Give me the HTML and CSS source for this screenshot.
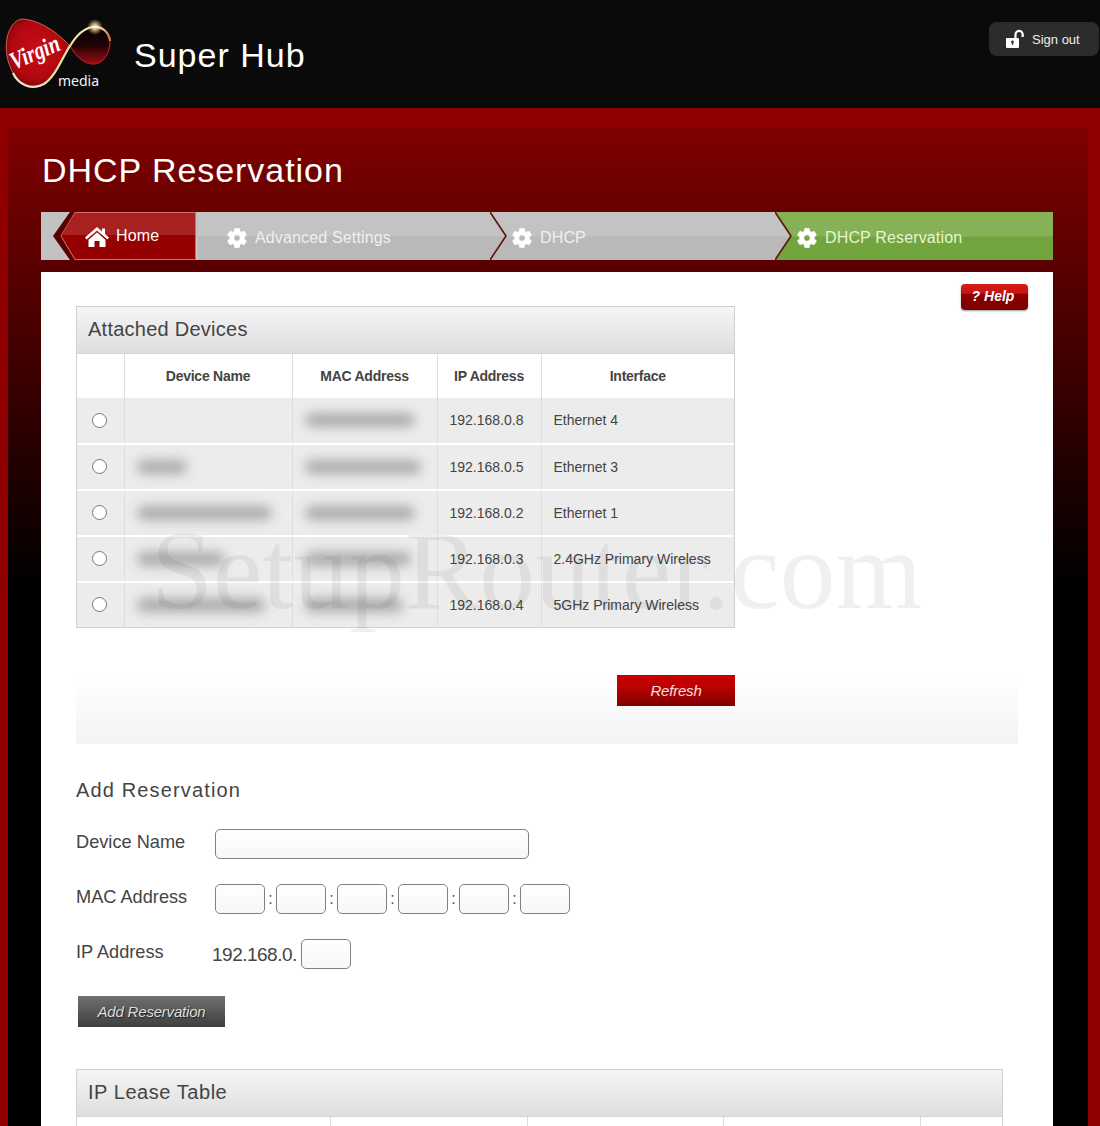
FILE: index.html
```html
<!DOCTYPE html>
<html lang="en">
  <head>
    <meta charset="utf-8" />
    <title>DHCP Reservation</title>
    <link rel="stylesheet" href="styles.css">
  </head>
  <body>
    <svg class="defs" xmlns="http://www.w3.org/2000/svg" width="0" height="0">
      <defs>
        <linearGradient id="tip-grey" x1="0" y1="0" x2="0" y2="1">
          <stop offset="0" stop-color="#c3c3c3"/>
          <stop offset="0.49" stop-color="#c3c3c3"/>
          <stop offset="0.53" stop-color="#b9b9b9"/>
          <stop offset="1" stop-color="#b9b9b9"/>
        </linearGradient>
      </defs>
      <symbol id="gear" viewBox="0 0 24 24">
        <path d="M19.14 12.94c.04-.3.06-.61.06-.94 0-.32-.02-.64-.07-.94l2.03-1.58c.18-.14.23-.41.12-.61l-1.92-3.32c-.12-.22-.37-.29-.59-.22l-2.39.96c-.5-.38-1.03-.7-1.62-.94l-.36-2.54c-.04-.24-.24-.41-.48-.41h-3.84c-.24 0-.43.17-.47.41l-.36 2.54c-.59.24-1.13.57-1.62.94l-2.39-.96c-.22-.08-.47 0-.59.22L2.74 8.87c-.12.21-.08.47.12.61l2.03 1.58c-.05.3-.09.63-.09.94s.02.64.07.94l-2.03 1.58c-.18.14-.23.41-.12.61l1.92 3.32c.12.22.37.29.59.22l2.39-.96c.5.38 1.03.7 1.62.94l.36 2.54c.05.24.24.41.48.41h3.84c.24 0 .44-.17.47-.41l.36-2.54c.59-.24 1.13-.56 1.62-.94l2.39.96c.22.08.47 0 .59-.22l1.92-3.32c.12-.22.07-.47-.12-.61l-2.01-1.58zM12 15.2c-1.77 0-3.2-1.43-3.2-3.2s1.43-3.2 3.2-3.2 3.2 1.43 3.2 3.2-1.43 3.2-3.2 3.2z"/>
      </symbol>
    </svg>

    <header class="topbar">
      <div class="brand">
        <svg class="logo" xmlns="http://www.w3.org/2000/svg" width="114" height="88" viewBox="0 0 114 88">
          <defs>
            <radialGradient id="lobe" cx="0.5" cy="0.45" r="0.65">
              <stop offset="0" stop-color="#cc0c14"/>
              <stop offset="0.65" stop-color="#b00810"/>
              <stop offset="1" stop-color="#5a0408"/>
            </radialGradient>
            <linearGradient id="lobe2" x1="0" y1="0" x2="0" y2="1">
              <stop offset="0" stop-color="#050202"/>
              <stop offset="0.5" stop-color="#200305"/>
              <stop offset="1" stop-color="#a00c14"/>
            </linearGradient>
            <linearGradient id="ribbon" x1="0" y1="0" x2="1" y2="0">
              <stop offset="0" stop-color="#e9e4d8"/>
              <stop offset="0.55" stop-color="#e6e29a"/>
              <stop offset="0.88" stop-color="#fff3c8"/>
              <stop offset="1" stop-color="#e0703a"/>
            </linearGradient>
            <radialGradient id="spark">
              <stop offset="0" stop-color="#fff"/>
              <stop offset="0.4" stop-color="#ffe9b0" stop-opacity="0.7"/>
              <stop offset="1" stop-color="#ffb060" stop-opacity="0"/>
            </radialGradient>
          </defs>
          <path d="M70 36C75 27 82 19 92 17c10-1 18 5 18 14 0 13-7 22-15 23-11 1-19-8-25-18z" fill="url(#lobe2)" stroke="#b01a20" stroke-width="1.200"/>
          <path d="M23 9C37 10 54 19 69 35 62 48 56 66 44 74 34 81 20 78 13 63 7 52 5 40 7 28 9 18 15 9 23 9z" fill="url(#lobe)" stroke="#c9604e" stroke-width="1"/>
          <path d="M13 63c5 11 18 18 31 11C56 66 62 48 70 36 76 26 84 18 93 17c9-1 16 5 17 14" fill="none" stroke="url(#ribbon)" stroke-width="2.200"/>
          <circle cx="95" cy="17" r="8" fill="url(#spark)"/>
          <text class="logo-virgin" x="14" y="60" textLength="52" lengthAdjust="spacingAndGlyphs" transform="rotate(-23 14 60)">Virgin</text>
          <text class="logo-media" x="58" y="76">media</text>
        </svg>
        <span class="product">Super Hub</span>
      </div>
      <a class="signout">
        <svg xmlns="http://www.w3.org/2000/svg" width="20" height="20" viewBox="0 0 20 20">
          <path d="M2 9h11a1 1 0 0 1 1 1v8a1 1 0 0 1-1 1H2a1 1 0 0 1-1-1v-8a1 1 0 0 1 1-1z" fill="#fff"/>
          <path d="M10.500 9V5.500a3.600 3.600 0 0 1 7.200 0V8" fill="none" stroke="#fff" stroke-width="2.200"/>
          <circle cx="7.500" cy="13" r="1.400" fill="#333"/>
          <rect x="6.900" y="13" width="1.200" height="3" fill="#333"/>
        </svg>
        Sign out
      </a>
    </header>

    <div class="frame">
      <main class="panel">
        <h1 class="title">DHCP Reservation</h1>

        <nav class="crumbs">
          <a class="crumb crumb-home">
            <svg class="home-tab" xmlns="http://www.w3.org/2000/svg" width="156" height="48" viewBox="0 0 156 48">
              <path d="M0 0h29L12 24l17 24H0z" fill="#c2c2c2"/>
              <path d="M29 0L12 24l17 24h5L20 24 34 0z" fill="#5a0000"/>
              <path d="M34 .5h120.500v47H34L20 24z" fill="#950000" stroke="#d96b5f"/>
              <path d="M34 1h120v22H21z" fill="#a82222"/>
            </svg>
            <svg class="home-icon" xmlns="http://www.w3.org/2000/svg" width="24" height="20" viewBox="0 0 24 20">
              <path d="M12 0L0 10.500l1.600 1.900L12 3.400l10.400 9 1.600-1.900-4-3.500V1.500h-3v3z" fill="#fff"/>
              <path d="M12 5.500L3.500 12.800V20h6v-6h5v6h6v-7.200z" fill="#fff"/>
            </svg>
            Home
          </a>
          <a class="crumb crumb-grey crumb-wide">
            <svg class="gear"><use href="#gear"/></svg>
            Advanced Settings
            <svg class="chevron" xmlns="http://www.w3.org/2000/svg" width="18" height="48" viewBox="0 0 18 48"><path d="M0 0l16 24L0 48z" fill="url(#tip-grey)"/><path d="M0 0l16 24L0 48" fill="none" stroke="#5e1208" stroke-width="1.600"/></svg>
          </a>
          <a class="crumb crumb-grey crumb-mid">
            <svg class="gear"><use href="#gear"/></svg>
            DHCP
            <svg class="chevron" xmlns="http://www.w3.org/2000/svg" width="18" height="48" viewBox="0 0 18 48"><path d="M0 0l16 24L0 48z" fill="url(#tip-grey)"/><path d="M0 0l16 24L0 48" fill="none" stroke="#5e1208" stroke-width="1.600"/></svg>
          </a>
          <a class="crumb crumb-green">
            <svg class="gear"><use href="#gear"/></svg>
            DHCP Reservation
          </a>
        </nav>

        <section class="content">
          <a class="help">? Help</a>

          <div class="box box-attached">
            <h2 class="box-title">Attached Devices</h2>
            <table class="grid">
              <thead>
                <tr>
                  <th class="col-radio"></th>
                  <th class="col-name">Device Name</th>
                  <th class="col-mac">MAC Address</th>
                  <th class="col-ip">IP Address</th>
                  <th class="col-iface">Interface</th>
                </tr>
              </thead>
              <tbody>
                <tr>
                  <td class="radio-cell"><span class="radio"></span></td>
                  <td></td>
                  <td><span class="smudge w110"></span></td>
                  <td>192.168.0.8</td>
                  <td>Ethernet 4</td>
                </tr>
                <tr>
                  <td class="radio-cell"><span class="radio"></span></td>
                  <td><span class="smudge w50"></span></td>
                  <td><span class="smudge w116"></span></td>
                  <td>192.168.0.5</td>
                  <td>Ethernet 3</td>
                </tr>
                <tr>
                  <td class="radio-cell"><span class="radio"></span></td>
                  <td><span class="smudge w135"></span></td>
                  <td><span class="smudge w110"></span></td>
                  <td>192.168.0.2</td>
                  <td>Ethernet 1</td>
                </tr>
                <tr>
                  <td class="radio-cell"><span class="radio"></span></td>
                  <td><span class="smudge w88"></span></td>
                  <td><span class="smudge w106"></span></td>
                  <td>192.168.0.3</td>
                  <td>2.4GHz Primary Wireless</td>
                </tr>
                <tr>
                  <td class="radio-cell"><span class="radio"></span></td>
                  <td><span class="smudge w128"></span></td>
                  <td><span class="smudge w98"></span></td>
                  <td>192.168.0.4</td>
                  <td>5GHz Primary Wireless</td>
                </tr>
              </tbody>
            </table>
          </div>

          <div class="refresh-bar">
            <a class="btn-refresh">Refresh</a>
          </div>

          <h3 class="form-title">Add Reservation</h3>
          <div class="form-row">
            <label class="form-label">Device Name</label>
            <span class="field field-name"></span>
          </div>
          <div class="form-row">
            <label class="form-label">MAC Address</label>
            <span class="mac-fields">
              <span class="field field-small"></span><i class="colon">:</i>
              <span class="field field-small"></span><i class="colon">:</i>
              <span class="field field-small"></span><i class="colon">:</i>
              <span class="field field-small"></span><i class="colon">:</i>
              <span class="field field-small"></span><i class="colon">:</i>
              <span class="field field-small"></span>
            </span>
          </div>
          <div class="form-row">
            <label class="form-label">IP Address</label>
            <span class="ip-prefix">192.168.0.</span>
            <span class="field field-small"></span>
          </div>
          <a class="btn-add">Add Reservation</a>

          <div class="box box-lease">
            <h2 class="box-title">IP Lease Table</h2>
            <div class="lease-cols">
              <span></span><span></span><span></span><span></span><span></span>
            </div>
          </div>

          <div class="watermark">SetupRouter.com</div>
        </section>
      </main>
    </div>
  </body>
</html>
```

FILE: styles.css
```css
* {
  box-sizing: border-box;
  font-family: "Liberation Sans", Arial, sans-serif;
}

html, body {
  height: 100%;
}

body {
  margin: 0;
  height: 1126px;
  overflow: hidden;
  background: #900000;
}

.defs {
  position: absolute;
}

/* top black strip */
.topbar {
  height: 108px;
  background: #0a0a0a;
  display: flex;
  justify-content: space-between;
  align-items: flex-start;
}

.brand {
  display: flex;
  align-items: center;
  height: 108px;
}

.logo {
  flex: none;
}

.logo-virgin {
  font-family: "Liberation Serif", serif;
  font-style: italic;
  font-weight: 700;
  font-size: 25px;
  fill: #fff;
}

.logo-media {
  font-family: "Noto Sans", sans-serif;
  font-size: 14px;
  fill: #f2f2f2;
}

.product {
  margin-left: 20px;
  margin-top: 2px;
  font-size: 34px;
  letter-spacing: 1px;
  color: #fff;
}

.signout {
  margin-top: 22px;
  width: 110px;
  height: 34px;
  margin-right: 1px;
  padding-left: 16px;
  display: flex;
  align-items: center;
  gap: 7px;
  background: #2c2c2c;
  border-radius: 8px;
  font-size: 13px;
  color: #eee;
}

/* red frame */
.frame {
  padding: 20px 12px 0 8px;
}

.panel {
  height: 998px;
  padding: 20px 35px 0 33px;
  background: linear-gradient(#800000 0, #000 460px);
}

.title {
  margin: 0;
  height: 64px;
  padding-left: 1px;
  font-size: 34px;
  font-weight: 400;
  line-height: 44px;
  letter-spacing: 0.95px;
  color: #fff;
}

/* breadcrumb */
.crumbs {
  display: flex;
  height: 48px;
  background: #c2c2c2;
}

.crumb {
  position: relative;
  height: 48px;
  padding-top: 4px;
  display: flex;
  align-items: center;
  font-size: 16px;
  letter-spacing: 0.15px;
  color: #f0f0f0;
}

.crumb-home {
  width: 156px;
  padding-left: 75px;
  padding-top: 0;
  color: #fff;
  isolation: isolate;
}

.home-tab {
  position: absolute;
  left: 0;
  top: 0;
  z-index: -1;
}

.home-icon {
  position: absolute;
  left: 44px;
  top: 15px;
}

.crumb-grey {
  background: linear-gradient(#c3c3c3 0, #c3c3c3 49%, #b9b9b9 53%, #b9b9b9 100%);
}

.crumb-wide {
  margin-left: 1px;
  width: 292px;
  padding-left: 27px;
}

.crumb-mid {
  width: 285px;
  padding-left: 20px;
}

.crumb-green {
  flex: 1;
  padding-left: 20px;
  background: linear-gradient(#86b157 0, #86b157 49%, #72a53e 53%, #72a53e 100%);
  color: #e8f5d2;
}

.gear {
  width: 24px;
  height: 24px;
  fill: #fff;
  stroke: #fff;
  stroke-width: 0.7;
  margin-right: 6px;
  flex: none;
}

.chevron {
  position: absolute;
  right: -18px;
  top: 0;
  z-index: 1;
}

/* white body */
.content {
  position: relative;
  background: #fff;
  margin-top: 12px;
  height: 860px;
  padding: 34px 35px 0 35px;
  color: #444;
}

.help {
  position: absolute;
  top: 12px;
  right: 25px;
  width: 67px;
  height: 26px;
  padding-right: 3px;
  border-radius: 4px;
  background: linear-gradient(#d81a1a 0, #c81414 35%, #8d0000 40%, #7a0000 100%);
  box-shadow: 0 1px 2px rgba(0, 0, 0, 0.4);
  color: #fff;
  font-size: 14px;
  font-weight: 700;
  font-style: italic;
  text-align: center;
  line-height: 25px;
}

.box {
  border: 1px solid #d0d0d0;
  background: #fff;
}

.box-attached {
  width: 659px;
}

.box-title {
  margin: 0;
  height: 47px;
  padding-left: 11px;
  font-size: 20px;
  font-weight: 400;
  line-height: 45px;
  letter-spacing: 0.25px;
  color: #444;
  background: linear-gradient(#f5f5f5, #dedede);
  border-bottom: 1px solid #d4d4d4;
}

.box-lease .box-title {
  letter-spacing: 0.55px;
}

.grid {
  width: 657px;
  border-collapse: collapse;
  table-layout: fixed;
  font-size: 14px;
}

.grid th {
  height: 44px;
  font-size: 14px;
  letter-spacing: -0.25px;
  color: #444;
  border-left: 1px solid #ddd;
  text-align: center;
  background: #fff;
}

.grid th:first-child,
.grid td:first-child {
  border-left: 0;
}

.grid td {
  height: 46px;
  padding-left: 12px;
  padding-bottom: 2px;
  background: #ececec;
  border-left: 1px solid #ddd;
  border-bottom: 2px solid #fff;
  color: #444;
}

.grid tr:last-child td {
  height: 45px;
  border-bottom: 0;
}

.col-radio {
  width: 47px;
}

.col-name {
  width: 168px;
}

.col-mac {
  width: 145px;
}

.col-ip {
  width: 104px;
}

.grid .radio-cell {
  padding: 0 2px 2px 0;
  text-align: center;
}

.radio {
  display: inline-block;
  width: 15px;
  height: 15px;
  border: 1px solid #777;
  border-radius: 50%;
  background: #fff;
  vertical-align: middle;
}

.smudge {
  display: block;
  height: 14px;
  background: #aaaaaa;
  border-radius: 7px;
  filter: blur(6px);
}

.w50 { width: 50px; }
.w88 { width: 88px; }
.w98 { width: 98px; }
.w106 { width: 106px; }
.w110 { width: 110px; }
.w116 { width: 116px; }
.w128 { width: 128px; }
.w135 { width: 135px; }

.refresh-bar {
  width: 942px;
  height: 69px;
  margin-top: 47px;
  padding-left: 541px;
  background: linear-gradient(#fff, #f3f3f3);
}

.btn-refresh {
  display: block;
  width: 118px;
  height: 31px;
  background: linear-gradient(#c80000 0, #bb0000 40%, #7c0000 100%);
  color: #f4e0e0;
  font-size: 15px;
  font-style: italic;
  letter-spacing: -0.2px;
  text-align: center;
  line-height: 31px;
}

.form-title {
  margin: 34px 0 27px;
  font-size: 20px;
  font-weight: 400;
  line-height: 24px;
  letter-spacing: 1.15px;
  color: #444;
}

.form-row {
  display: flex;
  align-items: center;
  height: 30px;
  margin-bottom: 25px;
}

.form-label {
  width: 139px;
  font-size: 18.2px;
  color: #444;
  position: relative;
  bottom: 2px;
}

.field {
  display: block;
  height: 30px;
  border: 1px solid #808080;
  border-radius: 5px;
  background: linear-gradient(#fff, #f7f7f7);
  flex: none;
}

.field-name {
  width: 314px;
}

.field-small {
  width: 50px;
}

.mac-fields {
  display: flex;
  align-items: center;
}

.colon {
  width: 11px;
  font-style: normal;
  font-size: 16px;
  text-align: center;
  color: #555;
}

.ip-prefix {
  margin-left: -3px;
  margin-right: 4px;
  padding-top: 2px;
  font-size: 19px;
  color: #444;
  letter-spacing: -0.5px;
}

.btn-add {
  display: block;
  width: 147px;
  height: 31px;
  margin-left: 2px;
  margin-top: 27px;
  background: linear-gradient(#707070 0, #5a5a5a 45%, #3e3e3e 100%);
  color: #ddd;
  font-size: 15px;
  font-style: italic;
  text-align: center;
  line-height: 31px;
  letter-spacing: -0.2px;
  text-shadow: 1px 1px 1px #222;
}

.box-lease {
  width: 927px;
  margin-top: 42px;
  height: 100px;
}

.lease-cols {
  display: grid;
  grid-template-columns: 254px 197px 196px 197px 1fr;
  height: 50px;
}

.lease-cols span {
  border-right: 1px solid #ddd;
}

.lease-cols span:last-child {
  border-right: 0;
}

/* stamped over the page */
.watermark {
  position: absolute;
  left: 110px;
  top: 239px;
  font-family: "Liberation Serif", serif;
  font-size: 111.5px;
  line-height: 120px;
  color: rgba(0, 0, 0, 0.06);
  white-space: nowrap;
  pointer-events: none;
}
```
